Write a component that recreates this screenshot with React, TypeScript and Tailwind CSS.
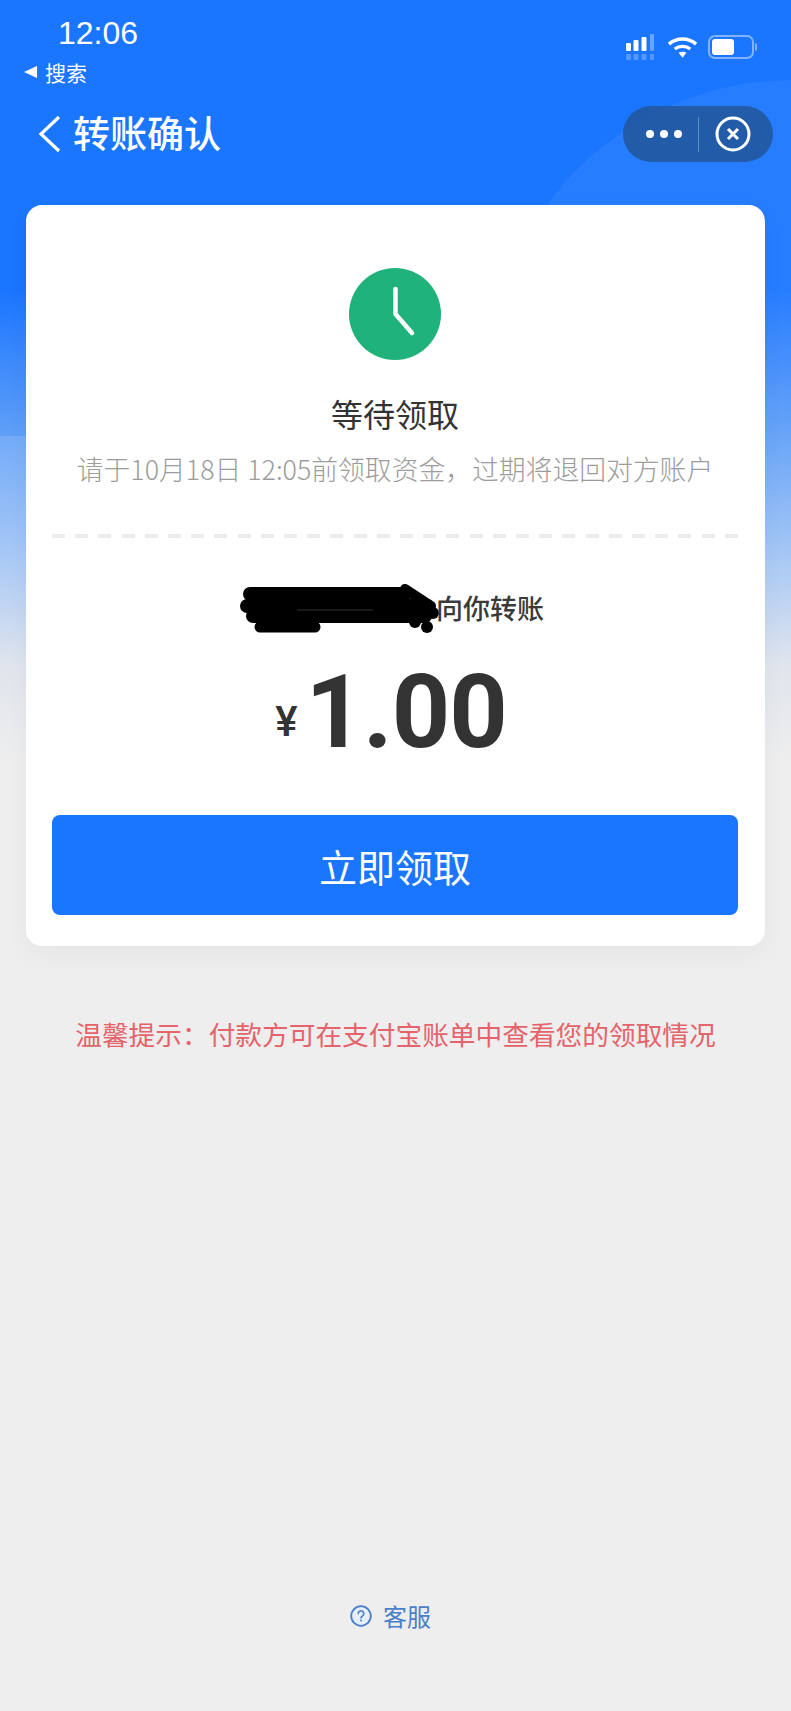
const cjk = "font-['Noto_Sans_CJK_SC','Noto_Sans',sans-serif]";

function SignalIcon() {
  return (
    <svg width="32" height="26" viewBox="0 0 32 26" fill="#fff">
      <rect x="1" y="9" width="5" height="8" rx="1" />
      <rect x="8.5" y="6" width="5" height="11" rx="1" />
      <rect x="16.5" y="3" width="5" height="14" rx="1" />
      <rect x="25" y="0" width="4" height="17" rx="1" fillOpacity="0.35" />
      <rect x="1" y="20" width="5" height="6" rx="1" fillOpacity="0.25" />
      <rect x="8.5" y="20" width="5" height="6" rx="1" fillOpacity="0.25" />
      <rect x="16.5" y="20" width="5" height="6" rx="1" fillOpacity="0.25" />
      <rect x="25" y="20" width="4" height="6" rx="1" fillOpacity="0.25" />
    </svg>
  );
}

function WifiIcon() {
  return (
    <svg width="31" height="22" viewBox="0 0 32 22" fill="none">
      <path d="M2 8C10 1 22 1 30 8" stroke="#fff" strokeWidth="3.6" />
      <path d="M8 13C12.5 9.5 19.5 9.5 24 13" stroke="#fff" strokeWidth="3.4" />
      <path d="M12 17 16 22l4-5C17.5 15.5 14.5 15.5 12 17Z" fill="#fff" />
    </svg>
  );
}

function BatteryIcon() {
  return (
    <div className="flex items-center">
      <div className="flex h-[24px] w-[46px] items-center rounded-[7px] border-2 border-white/45 p-[2px]">
        <div className="h-full w-[22px] rounded-[3px] bg-white" />
      </div>
      <div className="ml-[1px] h-[8px] w-[2px] rounded-r bg-white/45" />
    </div>
  );
}

function ClockIcon() {
  return (
    <svg width="92" height="92" viewBox="0 0 92 92">
      <circle cx="46" cy="46" r="46" fill="#1fb27a" />
      <path d="M46.5 21v25L63 65" fill="none" stroke="#fff" strokeWidth="4.5" strokeLinecap="round" strokeLinejoin="round" />
    </svg>
  );
}

// the black scribble that hides the sender's name in the screenshot
function NameScribble() {
  return (
    <svg className="absolute left-[-11px] top-[-3px]" width="210" height="60" viewBox="0 0 210 60" fill="none">
      <path d="M15 14H170M12 26H192M18 36H190" stroke="#000" strokeWidth="14" strokeLinecap="round" />
      <path d="M25 47H80" stroke="#000" strokeWidth="11" strokeLinecap="round" />
      <path d="M170 9 196 26" stroke="#000" strokeWidth="10" strokeLinecap="round" />
      <circle cx="180" cy="42" r="6" fill="#000" />
      <circle cx="192" cy="47" r="6" fill="#000" />
      <circle cx="198" cy="33" r="6" fill="#000" />
      <path d="M62 30H138" stroke="#333" />
    </svg>
  );
}

export default function App() {
  return (
    <div className={`relative flex h-[1711px] w-[791px] flex-col overflow-hidden bg-[linear-gradient(180deg,#1a75ff_0px,#1a75ff_290px,#5d9ef8_430px,#a9c9f5_570px,#dfe4ec_665px,#eeeeee_760px)] ${cjk}`}>
      {/* lighter arcs behind the header and the card */}
      <div className="absolute left-[488px] top-[80px] h-[610px] w-[610px] rounded-full bg-white/[0.06]" />
      <div className="absolute left-[-400px] top-[436px] h-[300px] w-[700px] rounded-full bg-linear-to-b from-white/[0.12] to-transparent" />

      <div className="relative flex h-[90px] items-start justify-between">
        <div className="pl-[24px] pt-[14px]">
          <div className="pl-[34px] font-['Liberation_Sans',sans-serif] text-[32px] leading-[38px] text-white">12:06</div>
          <div className="mt-[6px] flex items-center gap-[8px] text-[21px] leading-[28px] text-white">
            <span className="h-0 w-0 border-y-[6px] border-r-[13px] border-y-transparent border-r-white" />
            搜索
          </div>
        </div>
        <div className="flex items-center gap-[10px] pr-[34px] pt-[34px]">
          <SignalIcon />
          <WifiIcon />
          <BatteryIcon />
        </div>
      </div>

      <div className="relative flex h-[115px] items-start justify-between pl-[38px] pr-[18px] pt-[16px]">
        <div className="flex h-[56px] items-center gap-[11px]">
          <svg width="24" height="38" viewBox="0 0 24 38" fill="none">
            <path d="M21 2 3 19l18 17" stroke="#fff" strokeWidth="3.2" />
          </svg>
          <span className="pb-[4px] text-[37px] font-medium leading-[44px] text-white">转账确认</span>
        </div>
        <div className="flex h-[56px] w-[150px] items-center rounded-full bg-[#22589f]/90">
          <div className="ml-[23px] flex gap-[6px]">
            <span className="h-[8px] w-[8px] rounded-full bg-white" />
            <span className="h-[8px] w-[8px] rounded-full bg-white" />
            <span className="h-[8px] w-[8px] rounded-full bg-white" />
          </div>
          <div className="ml-[16px] h-[35px] w-px bg-white/30" />
          <svg className="ml-[16px]" width="36" height="36" viewBox="0 0 36 36" fill="none">
            <circle cx="18" cy="18" r="16" stroke="#fff" strokeWidth="3" />
            <path d="m13 13 10 10m0-10-10 10" stroke="#fff" strokeWidth="3" />
          </svg>
        </div>
      </div>

      <div className="relative mx-[26px] flex h-[741px] flex-col items-center rounded-[16px] bg-white pl-[26px] pr-[27px] pt-[63px] shadow-[0_8px_24px_rgba(0,0,0,0.04)]">
        <ClockIcon />
        <div className="mt-[30px] text-[32px] leading-[46px] text-[#333333]">等待领取</div>
        <div className="mt-[15px] whitespace-nowrap text-[26.8px] leading-[36px] font-light text-[#9c9c9c]">请于10月18日 12:05前领取资金，过期将退回对方账户</div>
        <div className="mt-[47px] h-[4px] w-full bg-[repeating-linear-gradient(90deg,#ececec_0px,#ececec_13px,transparent_13px,transparent_23.2px)]" />

        <div className="relative mt-[45px] flex h-[50px] items-center pl-[190px] text-[27px] font-medium text-[#3a3a3a]">
          <NameScribble />
          <span className="relative">向你转账</span>
        </div>

        <div className="mt-[25px] flex h-[108px] items-baseline pr-[8px] font-['Roboto',sans-serif] font-bold text-[#333333]">
          <span className="mr-[8px] -translate-y-[11px] text-[42px] font-medium">¥</span>
          <span className="text-[102px] leading-[108px] tracking-[-1px]">1.00</span>
        </div>

        <button className="mt-[49px] flex h-[100px] w-full items-center justify-center rounded-[8px] bg-[#1a75ff] text-[38px] text-white">
          立即领取
        </button>
      </div>

      <div className="relative mt-[70px] whitespace-nowrap text-center text-[26.7px] leading-[36px] text-[#e5636b]">
        温馨提示：付款方可在支付宝账单中查看您的领取情况
      </div>

      <div className="relative mt-auto mb-[78px] flex items-center justify-center gap-[11px] pr-[10px] text-[24px] leading-[34px] text-[#4a7fc9]">
        <svg width="22" height="22" viewBox="0 0 22 22" fill="none">
          <circle cx="11" cy="11" r="9.8" fill="#e6eefb" stroke="#4a7fc9" strokeWidth="1.8" />
          <path d="M8.2 8.6a2.8 2.8 0 1 1 4.3 2.4c-1 .6-1.5 1-1.5 2" stroke="#4a7fc9" strokeWidth="1.6" strokeLinecap="round" />
          <circle cx="11" cy="15.6" r="1" fill="#4a7fc9" />
        </svg>
        客服
      </div>
    </div>
  );
}
